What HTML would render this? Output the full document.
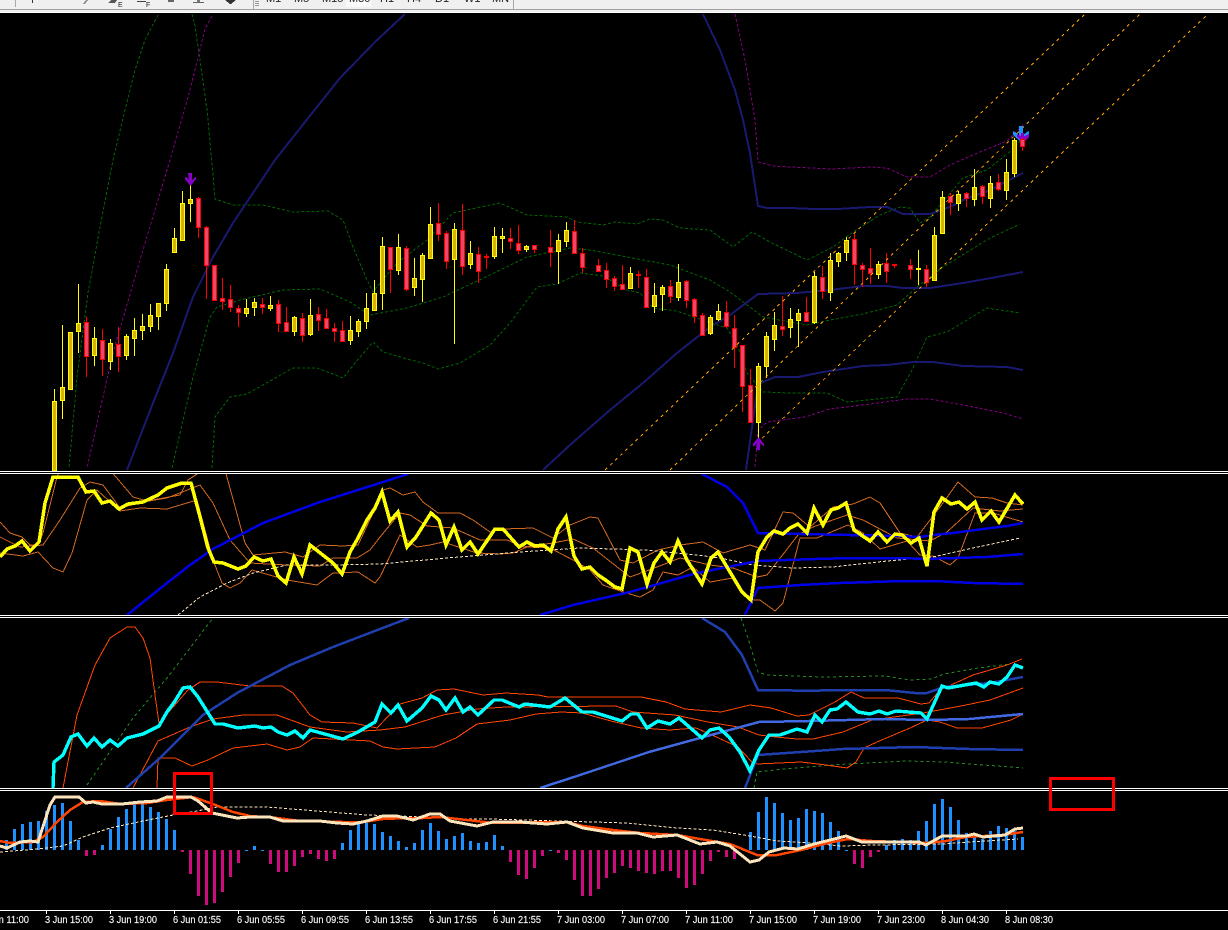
<!DOCTYPE html>
<html><head><meta charset="utf-8"><title>Chart</title>
<style>
html,body{margin:0;padding:0;background:#000;width:1228px;height:930px;overflow:hidden}
svg{display:block;position:absolute;left:0;top:0}
text{font-family:"Liberation Sans",sans-serif}
</style></head><body>
<svg width="1228" height="930" viewBox="0 0 1228 930" xmlns="http://www.w3.org/2000/svg">
<rect width="1228" height="930" fill="#000"/>

<!-- PANEL 1 -->
<g clip-path="url(#p1)" fill="none" shape-rendering="crispEdges">
<clipPath id="p1"><rect x="0" y="13" width="1228" height="458"/></clipPath>
<g stroke="#006400" stroke-dasharray="3 2">
<path d="M158 15L145 40 135 70 125 110 113 160 100 227 88 293 77 377 69 468"/>
<path d="M192 14L195 26 200 60 207 110 212 163 215 199 233 205 263 205 293 212 328 211 343 220 353 247 367 280 373 292 385 277 397 263 410 253 427 240 453 213 490 205 500 203 527 215 567 217 577 222 603 225 615 222 637 224 650 219 663 220 680 228 710 230 733 247 752 232 770 242 807 260 833 247 853 232 880 215 900 207 910 208 920 223 930 217 963 178 987 170 1012 150 1023 138"/>
<path d="M172 468L193 377 210 317 217 307 240 300 283 290 320 289 350 302 370 315 407 308 443 297 490 275 527 257 570 248 590 250 643 260 670 265 710 280 730 292 763 317 807 325 830 320 863 314 897 305 917 287 943 267 990 238 1020 224"/>
<path d="M212 468L215 417 230 397 247 394 277 377 293 368 317 368 343 378 360 357 373 342 383 352 407 359 423 363 438 369 460 363 490 345 510 323 537 287 557 284 580 273 603 276 627 290 640 293 653 308 677 311 693 317 727 328 738 347 747 373 763 392 790 393 827 393 847 402 897 397 912 370 927 337 947 332 987 308 1020 313"/>
</g>
<g stroke="#800080" stroke-dasharray="3 2">
<path d="M212 16L205 29 190 90 170 160 140 260 113 353 100 410 87 468"/>
<path d="M735 14L745 60 755 120 758 162 773 166 830 169 870 167 887 168 907 177 930 177 950 165 980 152 1007 141 1023 125"/>
<path d="M755 467L758 430 767 422 805 417 830 409 863 405 907 399 930 399 963 405 1003 413 1023 419"/>
</g>
<g stroke="#191970" stroke-width="2">
<path d="M127 470L153 403 173 353 193 297 213 257 233 223 253 193 275 160 305 122 340 78 375 42 405 14"/>
<path d="M703 14L720 50 735 90 743 120 750 153 758 206 767 208 790 208 813 209 838 209 870 207 887 207 903 214 930 214 950 207 963 200 990 190 1013 178 1023 173"/>
<path d="M543 470L570 445 610 410 643 383 677 353 710 327 730 315 758 294 797 293 830 290 863 286 887 286 903 288 930 288 963 283 997 277 1023 272"/>
<path d="M746 470L753 420 758 385 763 382 775 377 798 377 823 372 863 366 887 365 913 362 933 362 963 366 1007 367 1023 370"/>
</g>
<!-- wicks -->
<path stroke="#ff0" d="M54.5 389V470M62.5 325V419M70.5 332V390M78.5 284V353M94.5 327V366M110.5 339V370M126.5 334V360M134.5 318V356M142.5 314V340M150.5 304V332M158.5 303V330M166.5 264V311M174.5 228V253M182.5 191V241M190.5 181V222M246.5 299V317M254.5 298V316M270.5 296V311M294.5 316V336M310.5 299V336M350.5 316V345M358.5 319V337M366.5 293V329M374.5 280V310M382.5 237V310M398.5 234V275M414.5 258V296M422.5 253V302M430.5 207V258M454.5 223V344M470.5 241V269M494.5 227V259M502.5 228V253M526.5 245V252M558.5 234V284M566.5 222V247M630.5 267V288M654.5 283V313M662.5 285V311M678.5 264V301M710.5 315V335M718.5 304V321M758.5 363V443M766.5 332V378M774.5 312V351M790.5 308V338M798.5 309V347M814.5 272V324M830.5 253V301M838.5 252V267M846.5 237V261M878.5 261V279M918.5 250V285M934.5 227V280M942.5 191V233M958.5 191V211M974.5 169V206M990.5 176V208M1006.5 159V200M1014.5 138V177"/>
<path stroke="#f00" d="M86.5 317V377M102.5 329V376M118.5 327V372M198.5 197V238M206.5 226V299M214.5 265V301M222.5 278V310M230.5 285V312M238.5 305V327M262.5 298V314M278.5 300V332M286.5 307V331M302.5 313V342M318.5 307V331M326.5 309V328M334.5 323V342M342.5 321V341M390.5 247V293M406.5 246V291M438.5 203V241M446.5 231V269M462.5 204V275M478.5 247V283M486.5 254V269M510.5 228V249M518.5 225V254M534.5 245V253M550.5 230V267M574.5 220V254M582.5 248V273M598.5 259V271M606.5 263V288M614.5 276V291M622.5 265V289M638.5 271V288M646.5 269V307M670.5 280V303M686.5 280V308M694.5 298V323M702.5 313V335M726.5 301V328M734.5 315V368M742.5 345V412M750.5 369V422M782.5 296V336M806.5 297V321M822.5 266V299M854.5 233V285M862.5 263V287M870.5 248V284M886.5 253V283M894.5 264V268M910.5 259V279M926.5 265V287M950.5 193V215M966.5 192V207M982.5 185V204M998.5 174V191M1022.5 135V151"/>
<!-- bodies -->
<path stroke="#ff0" fill="#d8b400" d="M52.5 401.5h4V471h-4zM60.5 387.5h4V400.5h-4zM68.5 332.5h4V389.5h-4zM76.5 323.5h4V331.5h-4zM92.5 338.5h4V355.5h-4zM108.5 343.5h4V361.5h-4zM124.5 336.5h4V355.5h-4zM132.5 330.5h4V338.5h-4zM140.5 326.5h4V330.5h-4zM148.5 315.5h4V326.5h-4zM156.5 303.5h4V316.5h-4zM164.5 269.5h4V303.5h-4zM172.5 238.5h4V252.5h-4zM180.5 203.5h4V240.5h-4zM188.5 199.5h4V203.5h-4zM244.5 308.5h4V313.5h-4zM252.5 302.5h4V307.5h-4zM268.5 305.5h4V308.5h-4zM292.5 317.5h4V331.5h-4zM308.5 315.5h4V334.5h-4zM348.5 330.5h4V340.5h-4zM356.5 321.5h4V331.5h-4zM364.5 308.5h4V321.5h-4zM372.5 293.5h4V310.5h-4zM380.5 246.5h4V293.5h-4zM396.5 247.5h4V270.5h-4zM412.5 278.5h4V287.5h-4zM420.5 255.5h4V279.5h-4zM428.5 224.5h4V258.5h-4zM452.5 229.5h4V259.5h-4zM468.5 253.5h4V264.5h-4zM492.5 236.5h4V256.5h-4zM500.5 236.5h4V238.5h-4zM524.5 246.5h4V249.5h-4zM556.5 240.5h4V251.5h-4zM564.5 230.5h4V241.5h-4zM628.5 273.5h4V288.5h-4zM652.5 295.5h4V306.5h-4zM660.5 287.5h4V294.5h-4zM676.5 282.5h4V297.5h-4zM708.5 317.5h4V333.5h-4zM716.5 311.5h4V319.5h-4zM756.5 366.5h4V422.5h-4zM764.5 336.5h4V366.5h-4zM772.5 325.5h4V339.5h-4zM788.5 319.5h4V327.5h-4zM796.5 313.5h4V320.5h-4zM812.5 276.5h4V322.5h-4zM828.5 260.5h4V292.5h-4zM836.5 253.5h4V261.5h-4zM844.5 240.5h4V252.5h-4zM876.5 264.5h4V274.5h-4zM916.5 268.5h4V269.5h-4zM932.5 235.5h4V280.5h-4zM940.5 197.5h4V233.5h-4zM956.5 194.5h4V203.5h-4zM972.5 187.5h4V199.5h-4zM988.5 183.5h4V198.5h-4zM1004.5 172.5h4V190.5h-4zM1012.5 140.5h4V173.5h-4z"/>
<path stroke="#f00" fill="#ec4668" d="M84.5 322.5h4V356.5h-4zM100.5 340.5h4V359.5h-4zM116.5 344.5h4V356.5h-4zM196.5 198.5h4V227.5h-4zM204.5 227.5h4V265.5h-4zM212.5 265.5h4V300.5h-4zM220.5 298.5h4V301.5h-4zM228.5 299.5h4V307.5h-4zM236.5 308.5h4V312.5h-4zM260.5 304.5h4V307.5h-4zM276.5 304.5h4V323.5h-4zM284.5 322.5h4V331.5h-4zM300.5 318.5h4V335.5h-4zM316.5 314.5h4V320.5h-4zM324.5 318.5h4V328.5h-4zM332.5 328.5h4V331.5h-4zM340.5 330.5h4V341.5h-4zM388.5 247.5h4V269.5h-4zM404.5 248.5h4V289.5h-4zM436.5 223.5h4V234.5h-4zM444.5 233.5h4V261.5h-4zM460.5 230.5h4V266.5h-4zM476.5 254.5h4V271.5h-4zM484.5 256.5h4V257.5h-4zM508.5 238.5h4V241.5h-4zM516.5 243.5h4V250.5h-4zM532.5 245.5h4V249.5h-4zM548.5 247.5h4V252.5h-4zM572.5 231.5h4V253.5h-4zM580.5 253.5h4V267.5h-4zM596.5 265.5h4V271.5h-4zM604.5 270.5h4V279.5h-4zM612.5 278.5h4V286.5h-4zM620.5 284.5h4V289.5h-4zM636.5 274.5h4V275.5h-4zM644.5 277.5h4V307.5h-4zM668.5 286.5h4V296.5h-4zM684.5 281.5h4V300.5h-4zM692.5 299.5h4V316.5h-4zM700.5 315.5h4V335.5h-4zM724.5 312.5h4V326.5h-4zM732.5 328.5h4V347.5h-4zM740.5 345.5h4V386.5h-4zM748.5 385.5h4V422.5h-4zM780.5 326.5h4V329.5h-4zM804.5 312.5h4V321.5h-4zM820.5 277.5h4V291.5h-4zM852.5 239.5h4V264.5h-4zM860.5 265.5h4V269.5h-4zM868.5 268.5h4V273.5h-4zM884.5 263.5h4V271.5h-4zM892.5 264.5h4V265.5h-4zM908.5 265.5h4V269.5h-4zM924.5 269.5h4V282.5h-4zM948.5 196.5h4V202.5h-4zM964.5 193.5h4V198.5h-4zM980.5 186.5h4V196.5h-4zM996.5 182.5h4V189.5h-4zM1020.5 139.5h4V146.5h-4z"/>
<!-- channel -->
<g stroke="#ffa500" stroke-dasharray="3 4">
<path d="M605 470L1085 14"/>
<path d="M670 470L1140 14"/>
<path d="M757 443L1208 14"/>
</g>
</g>
<!-- arrows -->
<g shape-rendering="crispEdges">
<path fill="#8600c8" d="M188 173h4v7l3-3h1v2l-5.5 7-5.5-7v-2h1l3 3z"/>
<path fill="#8600c8" d="M756 450h4v-7l3 3h1v-2l-5.5-7-5.500 7v2h1l3-3z"/>
<path fill="#1e90ff" d="M1019 126h4v9l4-3 2-1v4l-8 7-8-7v-4l2 1 4 3z"/>
<path fill="#8600c8" d="M1021 133h3v3l3-1 2-1v3l-6 6-6-6v-3l2 1 2 1z"/>
</g>
<g shape-rendering="crispEdges"><path fill="none" stroke="#f00" d="M1022.5 138V140"/><rect x="1020.5" y="139.5" width="4" height="7" fill="#ec4668" stroke="#f00"/></g>

<!-- PANEL 2 -->
<g clip-path="url(#p2)" fill="none" shape-rendering="crispEdges">
<clipPath id="p2"><rect x="0" y="474" width="1228" height="141"/></clipPath>
<g stroke="#d2691e">
<path d="M0 522L10 533 22 537 30 545 38 545 43 533 57 477 60 470"/>
<path d="M110 470L133 497 147 501 180 495 188 480 200 472"/>
<path d="M225 470L245 543 253 555 285 552 303 557 320 545 343 546 358 545 373 513 383 490 390 488 403 495 415 492 423 502 438 513 460 513 473 520 490 532 503 529 533 528 553 538 570 525 590 517 598 518 620 560 633 563 658 550 680 545 703 542 723 553 750 545 765 550 783 512 793 513 810 527 833 507 853 504 870 497 880 503 900 533 917 537 940 507 958 482 975 497 992 498 1007 503 1023 505"/>
<path d="M0 537L20 547 43 545 60 520 80 488 90 482 103 485 120 508 143 502 167 498 200 485 213 503 230 540 250 563 267 564 287 565 320 566 333 558 357 558 370 550 380 537 400 513 410 515 427 526 453 528 480 540 507 540 523 547 553 543 573 539 593 548 630 577 657 567 680 558 710 565 733 568 757 577 767 575 798 535 813 527 847 515 863 520 897 538 930 541 947 532 973 508 1000 511 1023 509"/>
<path d="M0 553L23 556 38 552 53 568 63 572 72 553 87 500 97 490 120 511 140 508 167 509 197 500 213 560 222 583 230 588 240 583 252 570 287 580 317 585 333 573 358 572 375 583 380 577 400 535 417 547 430 545 443 542 477 553 500 554 513 553 527 547 550 548 573 560 590 570 603 585 623 592 640 597 653 590 663 572 678 575 693 567 710 582 733 578 750 600 760 600 775 611 783 603 800 538 817 538 848 525 863 533 880 549 907 541 920 555 933 556 950 565 958 558 975 513 993 513 1023 522"/>
</g>
<path stroke="#ffe4c0" stroke-dasharray="3 2" d="M178 615L200 597 227 583 253 573 287 565 333 565 380 564 447 558 520 552 580 548 647 550 697 555 720 558 753 565 793 568 833 567 887 561 933 557 973 548 1020 538"/>
<g stroke="#0000e6" stroke-width="2.5">
<path d="M127 615L167 583 190 565 213 549 263 523 320 502 380 483 408 474"/>
<path d="M702 474L727 487 743 503 758 533 800 534 900 536 920 537 933 535 953 533 983 529 1007 526 1023 523"/>
<path d="M540 615L573 605 630 592 697 573 758 561 815 559 853 558 902 558 923 559 987 557 1023 554"/>
<path d="M745 615L758 588 800 585 840 583 903 581 933 581 973 583 1023 584"/>
</g>
<path stroke="#ff0" stroke-width="3.5" stroke-linejoin="miter" d="M0 557L7 549 15 546 22 541 30 551 39 542 45 503 53 477 78 477 86 492 94 491 102 503 110 501 119 509 128 504 143 502 158 495 167 488 182 483 191 483 199 513 208 548 214 562 223 563 238 569 246 566 254 557 263 561 271 559 278 576 286 583 294 557 302 574 310 545 333 563 342 574 350 552 358 538 367 520 375 508 382 492 390 521 398 512 407 547 416 537 431 513 439 520 446 545 454 527 462 550 470 542 478 554 495 529 503 529 519 547 527 542 535 546 543 545 551 551 558 529 566 517 574 556 582 569 590 567 598 575 607 581 615 587 622 589 630 548 638 552 647 584 654 563 662 552 670 562 678 541 687 560 702 584 711 558 718 552 727 567 742 592 751 600 758 552 767 537 774 531 783 534 790 528 798 524 807 533 814 508 823 525 831 510 838 508 846 503 854 530 870 541 878 532 887 542 895 534 902 535 911 543 919 538 927 566 934 512 942 498 951 504 959 502 967 509 975 502 982 520 991 511 999 522 1015 495 1023 504"/>
</g>

<!-- PANEL 3 -->
<g clip-path="url(#p3)" fill="none" shape-rendering="crispEdges">
<clipPath id="p3"><rect x="0" y="618" width="1228" height="170"/></clipPath>
<g stroke="#228b22" stroke-dasharray="3 3">
<path d="M87 785L133 718 167 678 213 618"/>
<path d="M741 618L748 638 758 672 767 675 822 677 885 676 910 680 931 679 944 674 978 668 1011 664"/>
<path d="M754 788L757 772 784 769 830 765 906 761 944 762 1023 768"/>
</g>
<g stroke="#ff4500">
<path d="M63 788L77 715 95 665 110 638 127 627 135 627 143 638 150 658 155 695 159 723"/>
<path d="M159 723L188 690 200 682 217 682 250 686 282 686 293 693 310 715 322 722 353 723 377 728 400 704 422 698 437 690 454 689 483 695 506 693 538 695 548 697 641 697 666 702 685 709 721 712 750 705 771 708 797 716 809 715 835 702 851 692 864 698 898 698 921 704 929 703 940 690 973 675 1007 665 1022 659"/>
<path d="M133 788L158 741 190 727 213 719 243 715 277 715 310 727 347 732 380 730 405 727 443 715 477 709 506 707 616 706 633 712 675 715 708 722 738 727 759 735 776 737 797 739 813 739 843 732 872 720 923 713 961 706 990 700 1023 688"/>
<path d="M157 788L158 758 175 758 192 766 208 760 233 748 267 744 287 750 300 747 313 738 370 741 383 747 397 749 435 747 456 738 477 724 510 720 536 714 561 712 582 713 611 721 641 728 670 730 696 728 712 735 738 747 752 762 757 764 801 762 826 765 847 768 856 762 864 748 877 742 910 728 927 720 940 722 957 728 982 728 1011 720 1023 714"/>
</g>
<g stroke-width="2.5">
<path stroke="#1f3fae" d="M126 788L160 758 203 715 237 693 290 665 333 647 380 629 409 618"/>
<path stroke="#1f3fae" d="M702 618L725 632 742 655 758 690 784 690 801 691 839 690 885 690 915 693 927 693 944 687 990 683 1023 677"/>
<path stroke="#4169e1" d="M540 788L574 777 649 752 700 738 759 722 809 721 885 719 927 720 969 719 1023 714"/>
<path stroke="#1f3fae" d="M745 788L758 755 801 752 843 749 915 747 969 749 1023 750"/>
</g>
<path stroke="#0ff" stroke-width="3.4" d="M53 788L54 762 63 755 71 737 78 734 87 746 94 738 102 747 110 740 118 746 127 738 143 734 159 726 167 712 175 701 183 688 190 687 198 697 215 724 223 724 238 728 255 726 263 728 271 727 278 732 287 735 295 731 303 738 310 730 343 739 358 732 375 722 382 704 391 713 398 705 407 721 422 708 431 696 439 700 446 710 455 698 463 712 470 707 478 715 494 700 502 700 519 707 525 704 550 707 565 698 582 712 593 712 622 721 631 714 638 714 647 728 658 721 670 724 679 718 702 738 710 730 719 728 729 737 740 752 750 771 759 750 769 735 780 735 797 729 807 732 815 715 822 722 830 710 837 709 846 702 858 712 870 714 879 711 887 714 896 711 921 713 927 719 942 686 948 688 976 683 984 687 990 682 999 684 1007 677 1015 665 1023 668"/>
</g>

<!-- PANEL 4 histogram -->
<g fill="none" stroke-width="3" shape-rendering="crispEdges">
<path stroke="#1e90ff" d="M6.5 850V840M14.5 850V829M22.5 850V824M30.5 850V822M38.5 850V821M46.5 850V811M54.5 850V805M62.5 850V803M70.5 850V821M78.5 850V840M102.5 850V845M110.5 850V829M118.5 850V817M126.5 850V809M134.5 850V803M142.5 850V804M150.5 850V807M158.5 850V812M166.5 850V819M174.5 850V830M246.5 851V850M254.5 850V846M262.5 851V850M342.5 850V843M350.5 850V830M358.5 850V824M366.5 850V823M374.5 850V824M382.5 850V832M390.5 850V836M398.5 850V841M406.5 850V847M414.5 850V843M422.5 850V830M430.5 850V823M438.5 850V831M446.5 850V839M454.5 850V836M462.5 850V833M470.5 850V841M478.5 850V843M486.5 850V842M494.5 850V835M502.5 850V846M550.5 851V850M750.5 850V832M758.5 850V812M766.5 850V797M774.5 850V803M782.5 850V813M790.5 850V820M798.5 850V818M806.5 850V809M814.5 850V811M822.5 850V813M830.5 850V822M838.5 850V831M846.5 851V850M886.5 850V845M894.5 850V840M902.5 850V839M910.5 850V840M918.5 850V831M926.5 850V821M934.5 850V804M942.5 850V799M950.5 850V807M958.5 850V820M966.5 850V833M974.5 850V835M982.5 850V839M990.5 850V831M998.5 850V826M1006.5 850V828M1014.5 850V831M1022.5 850V837"/>
<path stroke="#cf0b7e" d="M86.5 850V856M94.5 850V855M182.5 850V852M190.5 850V874M198.5 850V896M206.5 850V905M214.5 850V903M222.5 850V892M230.5 850V877M238.5 850V863M270.5 850V864M278.5 850V872M286.5 850V872M294.5 850V866M302.5 850V857M310.5 850V854M318.5 850V859M326.5 850V861M334.5 850V859M510.5 850V862M518.5 850V875M526.5 850V879M534.5 850V868M542.5 850V856M558.5 850V853M566.5 850V860M574.5 850V880M582.5 850V896M590.5 850V896M598.5 850V889M606.5 850V878M614.5 850V873M622.5 850V866M630.5 850V868M638.5 850V871M646.5 850V873M654.5 850V874M662.5 850V871M670.5 850V871M678.5 850V878M686.5 850V888M694.5 850V885M702.5 850V874M710.5 850V861M718.5 850V852M726.5 850V857M734.5 850V859M854.5 850V864M862.5 850V868M870.5 850V857M878.5 850V852"/>
</g>
<g fill="none" shape-rendering="crispEdges">
<path stroke="#ffe4c0" stroke-dasharray="3 2" stroke-width="1" d="M0 852L13 851 37 849 63 846 83 837 110 828 143 821 173 815 197 811 217 807 267 807 317 811 367 815 400 816 463 819 490 819 627 823 677 828 713 830 750 836 777 841 811 843 841 846 875 845 942 844 969 842 1018 839"/>
<path stroke="#ff4500" stroke-width="2.5" d="M0 841L10 843 33 842 43 837 57 822 70 810 83 802 100 801 120 804 147 803 167 800 193 797 213 804 233 812 250 816 277 818 300 821 343 822 363 822 383 819 407 818 423 818 440 817 467 820 493 823 567 822 583 826 613 830 640 833 677 835 700 839 730 844 757 855 777 855 801 850 828 843 848 839 872 841 926 843 946 841 966 837 1003 835 1023 832"/>
<path stroke="#fbe3bb" stroke-width="3" d="M0 846L7 848 20 842 30 841 38 842 50 805 55 797 79 797 86 803 93 802 102 804 122 804 140 802 157 801 167 797 191 797 198 801 212 813 217 814 237 818 250 817 270 817 283 821 320 821 337 823 353 824 367 821 383 816 397 816 413 820 430 814 440 814 450 821 477 826 493 822 520 822 547 824 567 822 583 828 613 833 637 833 653 837 677 835 700 844 717 842 730 846 750 862 759 860 769 852 784 848 798 849 814 844 846 836 862 842 919 842 926 845 942 836 966 836 974 834 983 837 1005 835 1015 829 1023 828"/>
</g>

<!-- separators -->
<g fill="#fff" shape-rendering="crispEdges">
<rect x="0" y="471" width="1228" height="1"/><rect x="0" y="473" width="1228" height="1"/>
<rect x="0" y="615" width="1228" height="1"/><rect x="0" y="617" width="1228" height="1"/>
<rect x="0" y="788" width="1228" height="1"/><rect x="0" y="790" width="1228" height="1"/>
<rect x="0" y="910" width="1228" height="1"/>
<path d="M46 911h1v3h-1zM110 911h1v3h-1zM174 911h1v3h-1zM238 911h1v3h-1zM302 911h1v3h-1zM366 911h1v3h-1zM430 911h1v3h-1zM494 911h1v3h-1zM558 911h1v3h-1zM622 911h1v3h-1zM686 911h1v3h-1zM750 911h1v3h-1zM814 911h1v3h-1zM878 911h1v3h-1zM942 911h1v3h-1zM1006 911h1v3h-1z"/>
</g>

<!-- red boxes -->
<g fill="none" stroke="#f00" stroke-width="3" shape-rendering="crispEdges">
<rect x="174.5" y="773.5" width="37" height="40"/>
<rect x="1050.5" y="778.5" width="63" height="31"/>
</g>

<!-- time axis -->
<g fill="#f4f6ff" font-size="10" stroke="#fff" stroke-width=".15">
<text x="-19" y="923" textLength="48" lengthAdjust="spacingAndGlyphs">3 Jun 11:00</text>
<text x="45" y="923" textLength="48" lengthAdjust="spacingAndGlyphs">3 Jun 15:00</text>
<text x="109" y="923" textLength="48" lengthAdjust="spacingAndGlyphs">3 Jun 19:00</text>
<text x="173" y="923" textLength="48" lengthAdjust="spacingAndGlyphs">6 Jun 01:55</text>
<text x="237" y="923" textLength="48" lengthAdjust="spacingAndGlyphs">6 Jun 05:55</text>
<text x="301" y="923" textLength="48" lengthAdjust="spacingAndGlyphs">6 Jun 09:55</text>
<text x="365" y="923" textLength="48" lengthAdjust="spacingAndGlyphs">6 Jun 13:55</text>
<text x="429" y="923" textLength="48" lengthAdjust="spacingAndGlyphs">6 Jun 17:55</text>
<text x="493" y="923" textLength="48" lengthAdjust="spacingAndGlyphs">6 Jun 21:55</text>
<text x="557" y="923" textLength="48" lengthAdjust="spacingAndGlyphs">7 Jun 03:00</text>
<text x="621" y="923" textLength="48" lengthAdjust="spacingAndGlyphs">7 Jun 07:00</text>
<text x="685" y="923" textLength="48" lengthAdjust="spacingAndGlyphs">7 Jun 11:00</text>
<text x="749" y="923" textLength="48" lengthAdjust="spacingAndGlyphs">7 Jun 15:00</text>
<text x="813" y="923" textLength="48" lengthAdjust="spacingAndGlyphs">7 Jun 19:00</text>
<text x="877" y="923" textLength="48" lengthAdjust="spacingAndGlyphs">7 Jun 23:00</text>
<text x="941" y="923" textLength="48" lengthAdjust="spacingAndGlyphs">8 Jun 04:30</text>
<text x="1005" y="923" textLength="48" lengthAdjust="spacingAndGlyphs">8 Jun 08:30</text>
</g>

<!-- toolbar strip -->
<g shape-rendering="crispEdges">
<rect x="0" y="0" width="1228" height="13" fill="#f0f0f0"/>
<rect x="0" y="9" width="1228" height="1" fill="#a0a0a0"/>
<rect x="0" y="12" width="1228" height="1" fill="#fff"/>
<rect x="15" y="0" width="1" height="7" fill="#a8a8a8"/>
<rect x="253" y="0" width="1" height="9" fill="#a8a8a8"/>
<rect x="513" y="0" width="1" height="9" fill="#a8a8a8"/>
<rect x="32" y="0" width="1" height="3" fill="#333"/>
<path d="M83 4l3-4h2l-3 4z" fill="#888"/>
<path d="M108 3l3-3h6l-2 3z" fill="#555"/>
<rect x="137" y="1" width="9" height="1" fill="#444"/>
<rect x="168" y="0" width="6" height="2" fill="#666"/>
<rect x="193" y="2" width="11" height="1" fill="#666"/><rect x="197" y="0" width="3" height="2" fill="#777"/>
<path d="M225 0h11l-5 4h-1z" fill="#333"/>
<rect x="255" y="1" width="4" height="1" fill="#999"/><rect x="255" y="3" width="4" height="1" fill="#999"/><rect x="255" y="5" width="4" height="1" fill="#999"/>
<rect x="346" y="0" width="25" height="7" fill="#fafafa"/>
</g>
<g fill="#222" font-size="7"><text x="118" y="7">E</text><text x="146" y="7">F</text></g>
<g fill="#222" font-size="11">
<text x="266" y="2">M1</text><text x="294" y="2">M5</text><text x="322" y="2">M15</text><text x="349" y="2">M30</text><text x="380" y="2">H1</text><text x="407" y="2">H4</text><text x="435" y="2">D1</text><text x="464" y="2">W1</text><text x="492" y="2">MN</text>
</g>
</svg>
</body></html>
